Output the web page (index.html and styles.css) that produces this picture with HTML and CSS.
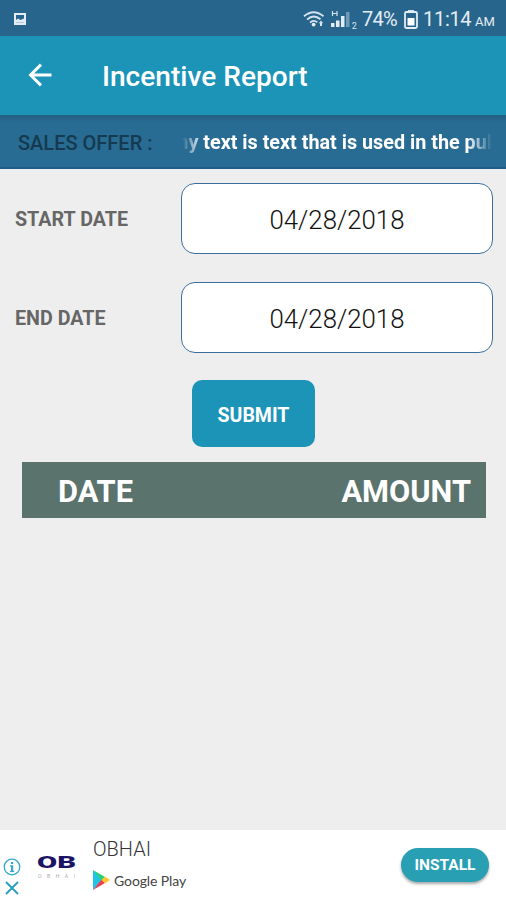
FILE: index.html
```html
<!DOCTYPE html>
<html>
<head>
<meta name="viewport" content="width=device-width, initial-scale=1.0" charset="UTF-8">
<title>Incentive Report</title>
<link rel="stylesheet" href="styles.css">
</head>
<body>

<div class="statusbar">
	<svg class="picture" width="12" height="12" viewBox="0 0 12 12">
		<path fill="#e4edf3" fill-rule="evenodd" d="M0 0h12v12H0zM2 2v7.500h8V2z"/>
		<path fill="#e4edf3" d="M2 9.500V7l2-1.500 2.500 1.500L10 5.500v4z"/>
	</svg>
	<svg class="wifi" width="22" height="18" viewBox="0 0 22 18">
		<g fill="none" stroke="#d5e3ee" stroke-width="1.8">
			<path d="M1 6.2Q10.500-1.800 20.500 6.200"/>
			<path d="M4 9.700Q10.500 3.600 17.500 9.300"/>
			<path d="M7 12.700Q10.500 9.300 14.300 12.300"/>
		</g>
		<circle cx="10.600" cy="14.600" r="1.900" fill="#e4edf3"/>
		<path fill="#d5e3ee" d="M18 10.500l2.200 2.800H19V16h-2v-2.700h-1.200z"/>
	</svg>
	<svg class="signal" width="27" height="19" viewBox="0 0 27 19">
		<path fill="none" stroke="#d5e3ee" stroke-width="1.200" d="M1.500 1v5M6 1v5M1.500 3.500H6"/>
		<path fill="#e4edf3" d="M0 13h3.500v4H0zM5 10.500h3.500V17H5zM10 6h3.500v11H10z"/>
		<path fill="#6f9bb8" d="M15 2h3.500v15H15z"/>
		<text x="20.800" y="18.500" font-size="9" fill="#d5e3ee">2</text>
	</svg>
	<span class="percent">74%</span>
	<svg class="battery" width="14" height="19" viewBox="0 0 14 19">
		<path fill="#d5e3ee" d="M4 0h6v2H4z"/>
		<rect x="1" y="2" width="12" height="16" rx="1.500" fill="none" stroke="#e4edf3" stroke-width="1.800"/>
		<path fill="#fff" d="M3.500 8h7v7.500h-7z"/>
	</svg>
	<span class="clock">11:14</span>
	<span class="ampm">AM</span>
</div>

<div class="toolbar">
	<svg width="24" height="24" viewBox="0 0 24 24">
		<path fill="none" stroke="#fff" stroke-width="2.900" d="M23.500 12H3M13 1.600L2.500 12 13 22.400"/>
	</svg>
	<h1>Incentive Report</h1>
</div>

<div class="offer">
	<div class="offer_label">SALES OFFER :</div>
	<div class="marquee"><span>ny text is text that is used in the pul</span></div>
</div>

<div class="form">
	<div class="row">
		<div class="label">START DATE</div>
		<div class="date">04/28/2018</div>
	</div>
	<div class="row">
		<div class="label">END DATE</div>
		<div class="date">04/28/2018</div>
	</div>
	<button class="submit">SUBMIT</button>
</div>

<div class="table_head">
	<div>DATE</div>
	<div>AMOUNT</div>
</div>

<div class="ad">
	<div class="ad_icons">
		<svg width="18" height="18" viewBox="0 0 18 18">
			<circle cx="9" cy="9" r="7.800" fill="none" stroke="#35a9c7" stroke-width="1.300"/>
			<path fill="#35a9c7" d="M8 4h2.200v2H8zM7 7.300h3.200v5.400h1v1.200H7v-1.200h1V8.500H7z"/>
		</svg>
		<svg class="close" width="14" height="14" viewBox="0 0 14 14">
			<path fill="none" stroke="#269dbd" stroke-width="1.800" d="M1 1l12 12M13 1L1 13"/>
		</svg>
	</div>
	<svg class="logo" width="42" height="26" viewBox="0 0 42 26">
		<text class="logo_big" x="0" y="13" textLength="39" lengthAdjust="spacingAndGlyphs">OB</text>
		<text class="logo_small" x="1" y="22.500" textLength="37">OBHAI</text>
	</svg>
	<div class="ad_text">
		<div class="ad_name">OBHAI</div>
		<div class="store">
			<svg width="17" height="20" viewBox="0 0 17 20">
				<path fill="#20c4e8" d="M0 0v20l9-10z"/>
				<path fill="#26cf78" d="M0 0l12 7-3.500 3.500z"/>
				<path fill="#ef3d50" d="M0 20l12-7-3.500-3.500z"/>
				<path fill="#ffc62e" d="M12 6.500l5 3.500-5 3.500L8.500 10z"/>
			</svg>
			<span>Google Play</span>
		</div>
	</div>
	<button class="install">INSTALL</button>
</div>

</body>
</html>
```
FILE: styles.css
```css
* {
  box-sizing: border-box;
}

body {
  margin: 0;
  height: 900px;
  display: flex;
  flex-direction: column;
  background-color: #eeeeee;
  font-family: Roboto, "Liberation Sans", sans-serif;
  white-space: nowrap;
  overflow: hidden;
}

svg {
  display: block;
  flex: none;
}

.statusbar {
  height: 36px;
  display: flex;
  align-items: center;
  padding: 2px 10px 0 14px;
  background-color: #28658c;
  color: #e4edf3;
  font-size: 20px;
}

.wifi {
  margin-left: auto;
}

.signal {
  margin-left: 6px;
}

.percent {
  width: 37px;
  margin-left: 4px;
  letter-spacing: -0.8px;
}

.battery {
  margin-left: 5px;
}

.clock {
  width: 48px;
  margin-left: 5px;
  letter-spacing: -0.3px;
}

.ampm {
  width: 21px;
  margin-left: 4px;
  padding-top: 4px;
  font-size: 13px;
}

.toolbar {
  height: 79px;
  display: flex;
  align-items: center;
  padding-left: 28px;
  background-color: #1c94b8;
  color: white;
}

.toolbar svg {
  margin-top: -2px;
}

.toolbar h1 {
  margin: 2px 0 0 50px;
  font-size: 28.1px;
  font-weight: 500;
}

.offer {
  height: 54px;
  display: flex;
  align-items: center;
  padding: 2px 14px 0 18px;
  background: linear-gradient(#245f80, #286b93 7px);
  border-bottom: 2px solid #1f5b88;
}

.offer_label {
  width: 161px;
  padding-top: 1px;
  color: #153a50;
  font-size: 20px;
  font-weight: 500;
}

.marquee {
  flex: 1;
  color: white;
  font-size: 19.8px;
  font-weight: bold;
  -webkit-mask-image: linear-gradient(to right, transparent 5px, black 26px, black 290px, transparent 315px);
  mask-image: linear-gradient(to right, transparent 5px, black 26px, black 290px, transparent 315px);
}

.form {
  padding: 14px 13px 0 15px;
}

.row {
  display: flex;
  align-items: center;
  margin-bottom: 28px;
}

.label {
  width: 166px;
  padding-top: 2px;
  color: #666666;
  font-size: 19.7px;
  font-weight: bold;
}

.date {
  flex: 1;
  height: 71px;
  display: flex;
  align-items: center;
  justify-content: center;
  padding-top: 2px;
  background-color: white;
  border: 1px solid #3d6f9e;
  border-radius: 14px;
  color: #111111;
  font-size: 25.8px;
  font-weight: 300;
}

.submit {
  display: block;
  width: 123px;
  height: 67px;
  margin: -1px 0 0 177px;
  padding: 4px 0 0;
  background-color: #1c94b8;
  border: none;
  border-radius: 10px;
  color: white;
  font-family: inherit;
  font-size: 19.5px;
  font-weight: bold;
}

.table_head {
  height: 56px;
  display: flex;
  align-items: center;
  justify-content: space-between;
  margin: 15px 20px 0 22px;
  padding: 2px 15px 0 36px;
  background-color: #5b736d;
  color: white;
  font-size: 30.8px;
  font-weight: bold;
}

.ad {
  height: 70px;
  display: flex;
  margin-top: auto;
  background-color: white;
}

.ad_icons {
  width: 37px;
  padding: 28px 0 0 3px;
}

.close {
  margin: 5px 0 0 2px;
}

.logo {
  margin-top: 25px;
}

.logo_big {
  fill: #1b1464;
  font-size: 16px;
  font-weight: 900;
}

.logo_small {
  fill: #aaaaaa;
  font-size: 5px;
}

.ad_text {
  padding: 7px 0 0 14px;
}

.ad_name {
  color: #333333;
  font-size: 20px;
  font-weight: 300;
  line-height: 24px;
}

.store {
  display: flex;
  align-items: center;
  margin-top: 9px;
  color: #444444;
  font-family: Lato, sans-serif;
  font-size: 14px;
  letter-spacing: -0.1px;
}

.store span {
  margin-left: 4px;
}

.install {
  width: 88px;
  height: 34px;
  margin: 18px 17px 0 auto;
  padding: 0 0 1px;
  background-color: #299fb3;
  border: none;
  border-radius: 17px;
  box-shadow: 0 2px 3px rgba(0, 0, 0, 0.35);
  color: white;
  font-family: inherit;
  font-size: 15.5px;
  font-weight: bold;
}
```
